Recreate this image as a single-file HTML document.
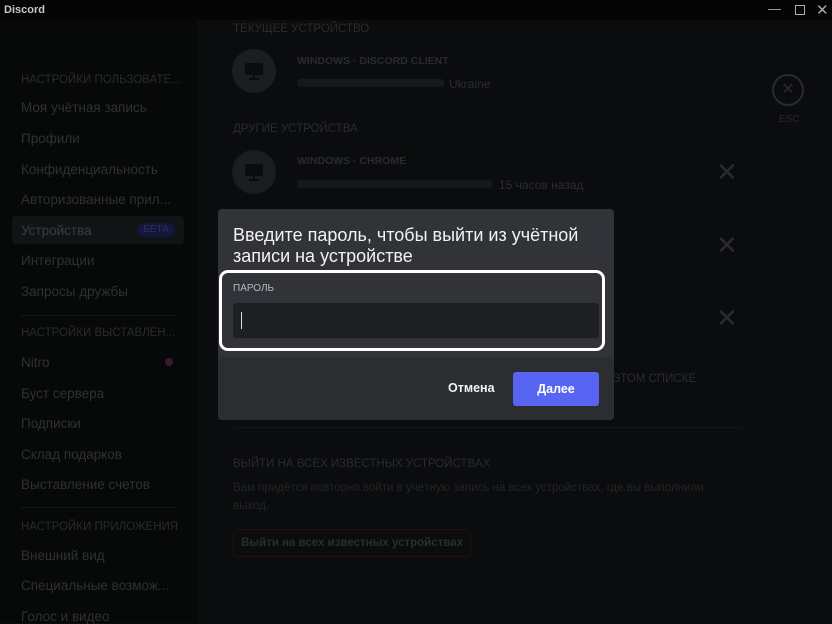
<!DOCTYPE html>
<html><head><meta charset="utf-8"><style>
*{margin:0;padding:0;box-sizing:border-box}
body{width:832px;height:623px;overflow:hidden;background:#0b0c0d;font-family:"Liberation Sans",sans-serif;position:relative}
.t{position:absolute;white-space:nowrap}
.tb{position:absolute;left:0;top:0;width:832px;height:20px;background:#050505}
.sb{position:absolute;left:0;top:20px;width:197px;height:603px;background:#070808}
.h{font-size:11.5px;color:#2a2b2e}
.it{font-size:13.5px;color:#2f3134}
.ic{position:absolute;width:44px;height:44px;border-radius:50%;background:#1c1d1f}
.ic svg{position:absolute;left:11px;top:11px}
.x{position:absolute;color:#2a2b2d;font-size:26px}
</style></head><body>
<div class="tb"></div>
<div class="t" style="left:4px;top:4px;font-size:11px;font-weight:bold;color:#c8c8c8">Discord</div>
<div class="t" style="left:768px;top:1px;color:#aaa;font-size:13px">—</div>
<div style="position:absolute;left:795px;top:5px;width:10px;height:10px;border:1px solid #aaa"></div>
<div class="t" style="left:816px;top:1px;color:#aaa;font-size:15px">✕</div>
<div class="sb"></div>
<div class="t h" style="left:21px;top:74px">НАСТРОЙКИ ПОЛЬЗОВАТЕ...</div>
<div class="t it" style="left:21px;top:100px">Моя учётная запись</div>
<div class="t it" style="left:21px;top:131px">Профили</div>
<div class="t it" style="left:21px;top:162px">Конфиденциальность</div>
<div class="t it" style="left:21px;top:192px">Авторизованные прил...</div>
<div style="position:absolute;left:12px;top:216px;width:172px;height:28px;background:#121315;border-radius:4px"></div>
<div class="t it" style="left:21px;top:223px;color:#3a3c40">Устройства</div>
<div style="position:absolute;left:137px;top:223px;width:38px;height:14px;border-radius:7px;background:#14163a;color:#2c3060;font-size:10px;text-align:center;line-height:14px">БЕТА</div>
<div class="t it" style="left:21px;top:253px">Интеграции</div>
<div class="t it" style="left:21px;top:284px">Запросы дружбы</div>
<div style="position:absolute;left:21px;top:315px;width:155px;height:1px;background:#151618"></div>
<div class="t h" style="left:21px;top:327px">НАСТРОЙКИ ВЫСТАВЛЕН...</div>
<div class="t it" style="left:21px;top:355px">Nitro</div>
<div style="position:absolute;left:165px;top:358px;width:8px;height:8px;border-radius:50%;background:#3a1a30"></div>
<div class="t it" style="left:21px;top:386px">Буст сервера</div>
<div class="t it" style="left:21px;top:416px">Подписки</div>
<div class="t it" style="left:21px;top:447px">Склад подарков</div>
<div class="t it" style="left:21px;top:477px">Выставление счетов</div>
<div style="position:absolute;left:21px;top:507px;width:155px;height:1px;background:#151618"></div>
<div class="t h" style="left:21px;top:521px">НАСТРОЙКИ ПРИЛОЖЕНИЯ</div>
<div class="t it" style="left:21px;top:548px">Внешний вид</div>
<div class="t it" style="left:21px;top:578px">Специальные возмож...</div>
<div class="t it" style="left:21px;top:609px">Голос и видео</div>

<div class="t h" style="left:233px;top:23px">ТЕКУЩЕЕ УСТРОЙСТВО</div>
<div class="ic" style="left:232px;top:49px"><svg width="22" height="22" viewBox="0 0 22 22"><rect x="2" y="3" width="18" height="12" rx="2" fill="#0b0c0d"/><rect x="10" y="15" width="2" height="3" fill="#0b0c0d"/><rect x="6" y="18" width="10" height="2" fill="#0b0c0d"/></svg></div>
<div class="t" style="left:297px;top:55px;font-size:10.5px;font-weight:bold;color:#2a2b2e">WINDOWS · DISCORD CLIENT</div>
<div style="position:absolute;left:297px;top:79px;width:148px;height:8px;background:#17181a;border-radius:4px"></div>
<div class="t" style="left:449px;top:77px;font-size:12px;color:#2c2d30">Ukraine</div>
<div style="position:absolute;left:772px;top:74px;width:32px;height:32px;border:2px solid #2a2b2d;border-radius:50%;color:#2a2b2d;text-align:center;line-height:28px;font-size:16px">✕</div>
<div class="t" style="left:779px;top:114px;font-size:10px;color:#2a2b2d">ESC</div>
<div class="t h" style="left:233px;top:123px">ДРУГИЕ УСТРОЙСТВА</div>
<div class="ic" style="left:232px;top:150px"><svg width="22" height="22" viewBox="0 0 22 22"><rect x="2" y="3" width="18" height="12" rx="2" fill="#0b0c0d"/><rect x="10" y="15" width="2" height="3" fill="#0b0c0d"/><rect x="6" y="18" width="10" height="2" fill="#0b0c0d"/></svg></div>
<div class="t" style="left:297px;top:155px;font-size:10.5px;font-weight:bold;color:#2a2b2e">WINDOWS · CHROME</div>
<div style="position:absolute;left:297px;top:180px;width:196px;height:8px;background:#17181a;border-radius:4px"></div>
<div class="t" style="left:499px;top:178px;font-size:12px;color:#2c2d30">15 часов назад</div>
<div class="x" style="left:716px;top:157px">✕</div>
<div class="x" style="left:716px;top:230px">✕</div>
<div class="x" style="left:716px;top:303px">✕</div>
<div class="t h" style="left:612px;top:373px">ЭТОМ СПИСКЕ</div>
<div style="position:absolute;left:233px;top:427px;width:510px;height:1px;background:#141517"></div>
<div class="t h" style="left:233px;top:458px">ВЫЙТИ НА ВСЕХ ИЗВЕСТНЫХ УСТРОЙСТВАХ</div>
<div class="t" style="left:233px;top:482px;font-size:11.5px;color:#232426">Вам придётся повторно войти в учётную запись на всех устройствах, где вы выполнили</div>
<div class="t" style="left:233px;top:500px;font-size:11.5px;color:#232426">выход.</div>
<div style="position:absolute;left:233px;top:529px;width:238px;height:28px;border:1px solid #2a0c0e;border-radius:3px;color:#2c2d30;font-size:11.5px;font-weight:bold;text-align:center;line-height:26px">Выйти на всех известных устройствах</div>

<div style="position:absolute;left:218px;top:209px;width:396px;height:211px;background:#313338;border-radius:4px;overflow:hidden">
 <div style="position:absolute;left:0;top:148px;width:396px;height:63px;background:#2b2d31"></div>
 <div class="t" style="left:15px;top:16px;font-size:18px;line-height:21px;color:#f2f3f5">Введите пароль, чтобы выйти из учётной<br>записи на устройстве</div>
 <div style="position:absolute;left:1px;top:61px;width:386px;height:81px;border:3px solid #fff;border-radius:9px"></div>
 <div class="t" style="left:15px;top:74px;font-size:10px;color:#b5bac1">ПАРОЛЬ</div>
 <div style="position:absolute;left:15px;top:94px;width:366px;height:35px;background:#1e1f22;border-radius:3px"></div>
 <div style="position:absolute;left:23px;top:103px;width:1px;height:17px;background:#ddd"></div>
 <div class="t" style="left:230px;top:172px;font-size:12.5px;font-weight:bold;color:#f2f3f5">Отмена</div>
 <div style="position:absolute;left:295px;top:163px;width:86px;height:34px;background:#5865f2;border-radius:3px;color:#fff;font-size:12.5px;font-weight:bold;text-align:center;line-height:34px">Далее</div>
</div>
</body></html>
